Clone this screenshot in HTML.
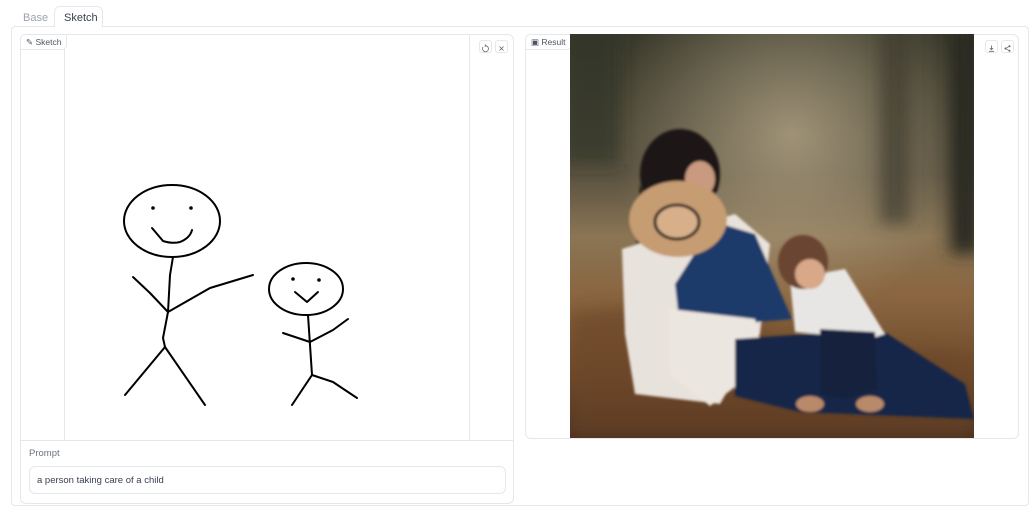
<!DOCTYPE html>
<html><head><meta charset="utf-8"><style>
*{box-sizing:border-box;margin:0;padding:0}
body{width:1032px;height:499px;background:#fff;font-family:"Liberation Sans",sans-serif;position:relative;overflow:hidden}
.abs{position:absolute}
.tab{font-size:11px;color:#9ca3af;top:12px}
.panel{border:1px solid #e5e7eb;border-radius:6px;background:#fff}
.lbl{border:1px solid #e5e7eb;border-radius:5px 0 5px 0;font-size:8.5px;color:#4b5563;background:#fff;height:16px;line-height:14px;padding:0 5px}
.btn{width:13px;height:13px;border:1px solid #e5e7eb;border-radius:3px;background:#fff}
</style></head><body>
<div class="abs tab" style="left:23px">Base</div>
<div class="abs" style="left:54px;top:6px;width:49px;height:21px;border:1px solid #e5e7eb;border-bottom:none;border-radius:6px 6px 0 0;background:#fff;z-index:2"></div>
<div class="abs tab" style="left:64px;color:#374151;z-index:3">Sketch</div>
<div class="abs" style="left:11px;top:26px;width:1018px;height:480px;border:1px solid #e5e7eb;border-radius:4px"></div>

<div class="abs panel" style="left:20px;top:34px;width:494px;height:470px;border-radius:6px"></div>
<div class="abs" style="left:64px;top:35px;width:1px;height:405px;background:#e5e7eb"></div>
<div class="abs" style="left:469px;top:35px;width:1px;height:405px;background:#e5e7eb"></div>
<div class="abs" style="left:21px;top:440px;width:492px;height:1px;background:#e5e7eb"></div>
<div class="abs lbl" style="left:20px;top:34px">✎ Sketch</div>
<div class="abs btn" style="left:479px;top:40px"><svg width="11" height="11" viewBox="0 0 11 11"><path d="M3 4a3 3 0 1 0 2.5-1.3" fill="none" stroke="#666" stroke-width=".8"/><path d="M5 1.5l1 1.2-1.3.8" fill="none" stroke="#666" stroke-width=".8"/></svg></div>
<div class="abs btn" style="left:495px;top:40px"><svg width="11" height="11" viewBox="0 0 11 11"><path d="M3.5 3.5l4 4M7.5 3.5l-4 4" stroke="#666" stroke-width=".8"/></svg></div>

<svg class="abs" style="left:0;top:0" width="520" height="440" viewBox="0 0 520 440" fill="none" stroke="#000" stroke-width="2" stroke-linecap="round" stroke-linejoin="round">
<ellipse cx="172" cy="221" rx="48" ry="36"/>
<circle cx="153" cy="208" r=".8" fill="#000"/><circle cx="191" cy="208" r=".8" fill="#000"/>
<path d="M152 228 L163 241 Q172 244 180 242 Q190 238 192 230"/>
<path d="M173 257 L170 275 L168 312 L163 338 L165 347"/>
<path d="M133 277 L150 293 L168 312"/>
<path d="M168 312 L210 288 L253 275"/>
<path d="M165 347 L125 395"/><path d="M165 347 L205 405"/>
<ellipse cx="306" cy="289" rx="37" ry="26"/>
<circle cx="293" cy="279" r=".8" fill="#000"/><circle cx="319" cy="280" r=".8" fill="#000"/>
<path d="M295 292 L307 302 L318 292"/>
<path d="M308 315 L312 375"/>
<path d="M283 333 L310 342 L333 330 L348 319"/>
<path d="M312 375 L292 405"/><path d="M312 375 L333 382 L357 398"/>
</svg>

<div class="abs" style="left:29px;top:448px;font-size:9.5px;color:#6b7280">Prompt</div>
<div class="abs" style="left:29px;top:466px;width:477px;height:28px;border:1px solid #e5e7eb;border-radius:6px;font-size:9.5px;color:#374151;padding:8px 7px">a person taking care of a child</div>

<div class="abs panel" style="left:525px;top:34px;width:494px;height:405px"></div>
<div class="abs lbl" style="left:525px;top:34px">▣ Result</div>
<div class="abs btn" style="left:985px;top:40px"><svg width="11" height="11" viewBox="0 0 11 11"><path d="M5.5 2.5v4M3.8 5l1.7 1.7L7.2 5M3 8.3h5" stroke="#666" stroke-width=".8" fill="none"/></svg></div>
<div class="abs btn" style="left:1001px;top:40px"><svg width="11" height="11" viewBox="0 0 11 11"><circle cx="7.5" cy="3.2" r="1" fill="#666"/><circle cx="3.5" cy="5.5" r="1" fill="#666"/><circle cx="7.5" cy="7.8" r="1" fill="#666"/><path d="M7.5 3.2L3.5 5.5 7.5 7.8" stroke="#666" stroke-width=".7" fill="none"/></svg></div>

<svg class="abs" style="left:570px;top:34px" width="404" height="404" viewBox="0 0 404 404">
<defs>
<linearGradient id="bg" x1="0" y1="0" x2="0" y2="1">
<stop offset="0" stop-color="#3a3a2c"/><stop offset=".35" stop-color="#5a5240"/><stop offset=".5" stop-color="#8a7555"/><stop offset=".65" stop-color="#8a6540"/><stop offset=".85" stop-color="#6e4a2c"/><stop offset="1" stop-color="#4a3020"/></linearGradient>
<radialGradient id="haze" cx=".55" cy=".25" r=".45"><stop offset="0" stop-color="#c0b090" stop-opacity=".7"/><stop offset="1" stop-color="#c0b090" stop-opacity="0"/></radialGradient>
<filter id="bl"><feGaussianBlur stdDeviation="8"/></filter>
<filter id="b2"><feGaussianBlur stdDeviation="1.2"/></filter>
</defs>
<rect width="404" height="404" fill="url(#bg)"/>
<rect width="404" height="404" fill="url(#haze)"/>
<g filter="url(#bl)">
<rect x="380" y="-10" width="30" height="230" fill="#2a2a22"/>
<rect x="310" y="-10" width="30" height="200" fill="#3e3a2c" opacity=".7"/>
<rect x="-10" y="-10" width="60" height="140" fill="#2e3026" opacity=".6"/>
<path d="M0 280 Q100 260 200 300 L404 320 L404 404 L0 404Z" fill="#6a4428" opacity=".6"/>
</g>
<g filter="url(#b2)">
<ellipse cx="110" cy="140" rx="40" ry="45" fill="#1e1614"/>
<path d="M70 150 L100 240 L80 260 L65 230Z" fill="#1e1614"/>
<ellipse cx="130" cy="145" rx="15" ry="18" fill="#c99a80"/>
<path d="M52 215 L165 180 L200 210 L190 300 L150 370 L65 360 L55 300Z" fill="#e8e2dc"/>
<path d="M145 188 L185 200 L222 285 L110 295 L105 250Z" fill="#1f3a6a"/>
<path d="M100 275 L185 285 L195 330 L140 372 L100 340Z" fill="#ece6e0"/>
<path d="M165 305 L310 295 L395 350 L404 385 L230 378 L165 362Z" fill="#18284a"/>
<path d="M220 245 L275 235 L315 300 L300 305 L225 298Z" fill="#e8e6e4"/>
<path d="M250 295 L305 298 L308 355 L275 365 L250 360Z" fill="#14203c"/>
<ellipse cx="233" cy="228" rx="25" ry="27" fill="#6a4430"/>
<ellipse cx="240" cy="240" rx="15" ry="15" fill="#d8a888"/>
<ellipse cx="108" cy="185" rx="49" ry="38" fill="#c69c72"/>
<ellipse cx="107" cy="188" rx="22" ry="17" fill="#d7b08a" stroke="#1a1a1a" stroke-width="3"/>
<ellipse cx="240" cy="370" rx="14" ry="8" fill="#b88a6a"/>
<ellipse cx="300" cy="370" rx="14" ry="8" fill="#b88a6a"/>
</g>
</svg>
</body></html>
